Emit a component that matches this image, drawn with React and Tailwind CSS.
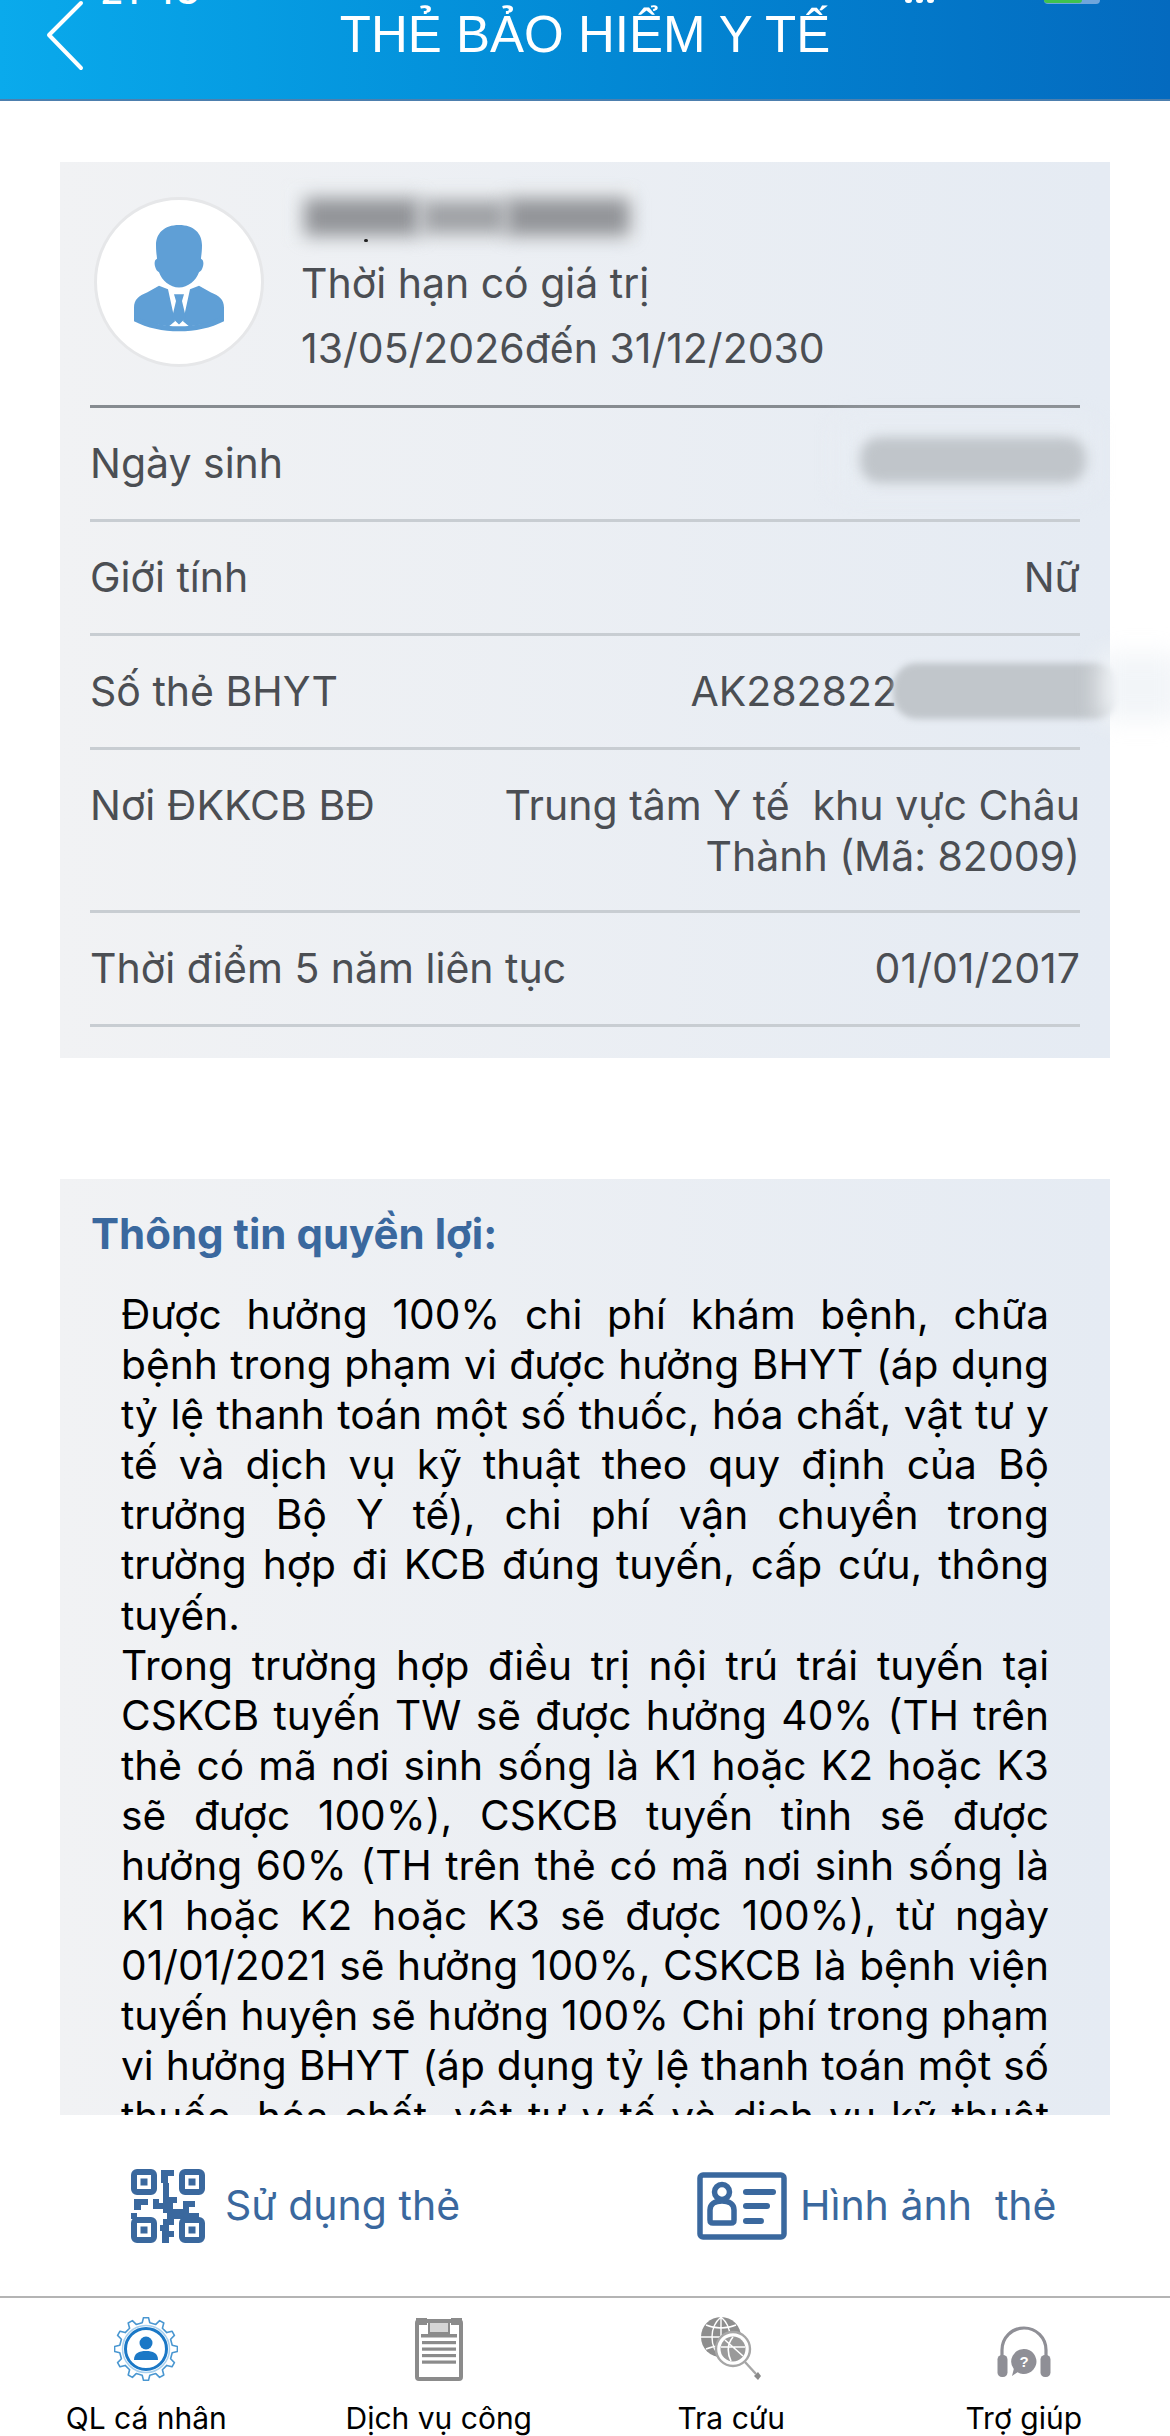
const FONT = "font-['Inter','Noto_Sans',sans-serif]";

const ROWS = [
  { label: 'Ngày sinh', value: '' },
  { label: 'Giới tính', value: 'Nữ' },
  { label: 'Số thẻ BHYT', value: 'AK282822', masked: true },
  { label: 'Nơi ĐKKCB BĐ', value: 'Trung tâm Y tế  khu vực Châu Thành (Mã: 82009)', wide: true },
  { label: 'Thời điểm 5 năm liên tục', value: '01/01/2017' },
];

function Gear() {
  // teeth are worked out around the circle
  const pts = [];
  const n = 12;
  for (let i = 0; i < n; i++) {
    const a = (i / n) * Math.PI * 2;
    const step = Math.PI / n;
    [[-0.55, 26.5], [-0.3, 31.5], [0.3, 31.5], [0.55, 26.5]].forEach(([o, r]) => {
      const t = a + o * step;
      pts.push(`${(32 + r * Math.cos(t)).toFixed(1)},${(32 + r * Math.sin(t)).toFixed(1)}`);
    });
  }
  return (
    <svg width="64" height="64" viewBox="0 0 64 64" fill="none">
      <polygon points={pts.join(' ')} stroke="#4a97d1" strokeWidth="1.6" strokeLinejoin="round" />
      <circle cx="32" cy="32" r="23.5" stroke="#a8d0ee" strokeWidth="1.5" />
      <circle cx="32" cy="32" r="20.5" stroke="#1b78c6" strokeWidth="3" />
      <circle cx="32" cy="26" r="6.5" fill="#1b78c6" />
      <path d="M20 43c0-7 5-9 12-9s12 2 12 9z" fill="#1b78c6" />
    </svg>
  );
}

function Clipboard() {
  return (
    <svg width="48" height="64" viewBox="0 0 48 64" fill="none">
      <rect x="2" y="4" width="44" height="58" rx="2" stroke="#8b8b8b" strokeWidth="4" />
      <rect x="1" y="1" width="11" height="7" fill="#8b8b8b" />
      <rect x="36" y="1" width="11" height="7" fill="#8b8b8b" />
      <rect x="14" y="5" width="20" height="11" fill="#d5d5d5" stroke="#8b8b8b" strokeWidth="2" />
      <rect x="6" y="17" width="36" height="3.5" fill="#8b8b8b" />
      <rect x="7" y="24" width="34" height="3.2" fill="#8b8b8b" />
      <rect x="7" y="30.5" width="34" height="3.2" fill="#8b8b8b" />
      <rect x="7" y="37" width="34" height="3.2" fill="#8b8b8b" />
      <rect x="7" y="43.5" width="34" height="3.2" fill="#8b8b8b" />
    </svg>
  );
}

function GlobeSearch() {
  return (
    <svg width="62" height="66" viewBox="0 0 62 66" fill="none">
      <circle cx="21" cy="21" r="20" fill="#8e8e8e" />
      <path d="M1 21h40M21 1v40M6 9c9 4 21 4 30 0M6 33c9-4 21-4 30 0M21 1c-12 10-12 30 0 40M21 1c12 10 12 30 0 40" stroke="#fff" strokeWidth="1.4" />
      <circle cx="33" cy="33" r="17" fill="#fff" stroke="#a6a6a6" strokeWidth="2.4" />
      <circle cx="33" cy="33" r="12.5" fill="#9a9a9a" />
      <path d="M21 31h24M33 21c-7 8-5 18-2 24M25 24l18 16" stroke="#fff" strokeWidth="1.6" />
      <path d="M45 46l11 12" stroke="#a6a6a6" strokeWidth="2.4" />
      <path d="M54 60l4-4 3 4-3 4z" fill="#8a8a8a" />
    </svg>
  );
}

function Headset() {
  return (
    <svg className="mt-[6px]" width="54" height="52" viewBox="0 0 54 52" fill="none">
      <path d="M5 30v-6a22 22 0 0 1 44 0v6" stroke="#8f8f96" strokeWidth="3.2" />
      <rect x="0.5" y="29" width="10" height="22" rx="4.5" fill="#8f8f96" />
      <rect x="43.5" y="29" width="10" height="22" rx="4.5" fill="#8f8f96" />
      <path d="M27 23a12.5 12.5 0 1 1-6.5 23.2L15 50l1.8-7A12.5 12.5 0 0 1 27 23z" fill="#8f8f96" />
      <text x="27" y="41" textAnchor="middle" fontSize="15" fontWeight="700" fill="#fff" fontFamily="Liberation Sans, sans-serif">?</text>
    </svg>
  );
}

function QrIcon() {
  const c = '#3a689e';
  return (
    <svg width="74" height="74" viewBox="0 0 74 74" fill="none">
      {[[0, 0], [48, 0], [0, 48], [48, 48]].map(([x, y]) => (
        <g key={`${x}-${y}`}>
          <rect x={x + 3} y={y + 3} width="20" height="20" rx="3" stroke={c} strokeWidth="6" />
          <rect x={x + 9.5} y={y + 9.5} width="7" height="7" fill={c} />
        </g>
      ))}
      <path d="M30 1h13v6h-6v7h-7zM32 14h6v14h-6zM3 30h14v6h-7v5H3zM22 30h6v6h-6zM32 28h14v6h-4v6h10v-8h12v6h-6v6h10v6H36v-6h-4v-4h-10v-6h10zM0 44h6v6H0zM32 50h11v6h-5v6h5v6h-5v6h-7V62h-2v-6h3z" fill={c} />
    </svg>
  );
}

function IdIcon() {
  const c = '#3a689e';
  return (
    <svg width="90" height="68" viewBox="0 0 90 68" fill="none">
      <rect x="3" y="3" width="84" height="62" rx="3" stroke={c} strokeWidth="5.5" />
      <circle cx="25" cy="20" r="7.5" stroke={c} strokeWidth="5.5" />
      <path d="M13 48V38c0-6 5-9 12-9s12 3 12 9v10c0 2-1 3-3 3H16c-2 0-3-1-3-3z" stroke={c} strokeWidth="5.5" />
      <rect x="46" y="17" width="33" height="6" rx="3" fill={c} />
      <rect x="46" y="31" width="27" height="6" rx="3" fill={c} />
      <rect x="46" y="46" width="21" height="6" rx="3" fill={c} />
    </svg>
  );
}

function PersonIcon() {
  return (
    <svg className="-mt-[6px]" width="92" height="108" viewBox="0 0 92 128" preserveAspectRatio="none" fill="#5f9fd6">
      <path d="M46 0c15 0 23 10 23 24 0 8-1 14-1 16 2 1 3 4 2 9-1 4-2 6-4 7-3 10-11 18-20 18s-17-8-20-18c-2-1-3-3-4-7-1-5 0-8 2-9 0-2-1-8-1-16C23 10 31 0 46 0z" />
      <path d="M26 72l9 4 7 38-6 6C24 118 10 116 1 108v-10C1 88 6 84 14 80z" />
      <path d="M66 72l-9 4-7 38 6 6c12-2 26-4 35-12v-10c0-10-5-14-13-18z" />
      <path d="M41 82h10l-2 8 4 20-7 8-7-8 4-20z" />
      <path d="M1 106c13 10 29 14 45 14s32-4 45-14v8c-13 8-29 12-45 12S14 122 1 114z" />
    </svg>
  );
}

function Smudge({ className }) {
  return <div className={`absolute ${className}`} />;
}

export default function App() {
  const tabs = [
    { label: 'QL cá nhân', icon: <Gear /> },
    { label: 'Dịch vụ công', icon: <Clipboard /> },
    { label: 'Tra cứu', icon: <GlobeSearch /> },
    { label: 'Trợ giúp', icon: <Headset /> },
  ];

  return (
    <div className={`relative w-[1170px] h-[2436px] flex flex-col overflow-hidden bg-white ${FONT}`}>
      {/* Header */}
      <header className="relative h-[101px] shrink-0 flex justify-center bg-gradient-to-r from-[#0aaaec] to-[#046abf] border-b-2 border-[#4d7fae]">
        <span className="absolute left-[100px] -top-[29px] text-[38px] leading-[38px] font-medium text-white">21:43</span>
        <div className="absolute left-[905px] top-0 flex gap-[4px]">
          <i className="block w-[7px] h-[3px] bg-white rounded-b-sm" />
          <i className="block w-[7px] h-[3px] bg-white rounded-b-sm" />
          <i className="block w-[7px] h-[3px] bg-white rounded-b-sm" />
        </div>
        <div className="absolute left-[1044px] top-0 w-[56px] h-[4px] bg-[#6fa6dc] rounded-b-md">
          <div className="w-[38px] h-[3px] bg-[#3fc24f] rounded-b-md" />
        </div>
        <svg className="absolute left-[44px] top-0" width="42" height="74" viewBox="0 0 42 74" fill="none">
          <path d="M37 3L5 35l32 33" stroke="#fff" strokeWidth="4" strokeLinecap="round" strokeLinejoin="round" />
        </svg>
        <h1 className="font-['Liberation_Sans',sans-serif] font-normal text-[51px] leading-[70px] text-white">THẺ BẢO HIỂM Y TẾ</h1>
      </header>

      <main className="flex-1 min-h-0 flex flex-col px-[60px] pt-[61px]">
        {/* Card */}
        <section className="relative shrink-0 h-[896px] bg-gradient-to-r from-[#f1f2f4] to-[#e5ebf3] px-[30px] text-[#4b4e53] text-[41px] leading-[51px]">
          <div className="h-[246px] flex border-b-[3px] border-[#868b90]">
            <div className="mt-[35px] ml-[4px] w-[170px] h-[170px] shrink-0 rounded-full bg-white border-[3px] border-[#e6e7e9] flex items-center justify-center">
              <PersonIcon />
            </div>
            <div className="ml-[37px] pt-[89px] leading-[65px] whitespace-nowrap">
              <div>Thời hạn có giá trị</div>
              <div>13/05/2026đến 31/12/2030</div>
            </div>
          </div>
          {ROWS.map((r) => (
            <div key={r.label} className={`flex justify-between border-b-[3px] border-[#c8cdd2] pt-[30px] ${r.wide ? 'pb-[28px]' : 'pb-[30px]'}`}>
              <span className="shrink-0">{r.label}</span>
              <span className={`text-right whitespace-pre-wrap ${r.wide ? 'w-[620px]' : ''} ${r.masked ? 'pr-[183px]' : ''}`}>{r.value}</span>
            </div>
          ))}

          {/* blurred out personal data */}
          <Smudge className="left-[226px] top-[22px] w-[350px] h-[58px] bg-[#eef1f4] blur-[3px]" />
          <Smudge className="left-[244px] top-[36px] w-[116px] h-[38px] bg-[#929498] blur-[9px]" />
          <Smudge className="left-[362px] top-[38px] w-[84px] h-[34px] bg-[#9fa1a5] blur-[9px]" />
          <Smudge className="left-[446px] top-[36px] w-[124px] h-[38px] bg-[#929498] blur-[9px]" />
          <Smudge className="left-[304px] top-[77px] w-[4px] h-[3px] bg-[#222] rounded-full" />
          <Smudge className="left-[780px] top-[262px] w-[250px] h-[66px] bg-[#e8edf3] blur-md" />
          <Smudge className="left-[800px] top-[275px] w-[226px] h-[46px] bg-[#c0c5ca] rounded-[20px] blur-[6px]" />
          <Smudge className="left-[833px] top-[501px] w-[225px] h-[56px] bg-[#c1c6cb] rounded-[24px] blur-[3px]" />
          <Smudge className="left-[1040px] top-[492px] w-[80px] h-[66px] bg-[#f2f5f8] blur-md" />
        </section>

        {/* Benefits */}
        <section className="mt-[121px] h-[936px] shrink-0 overflow-hidden bg-gradient-to-r from-[#f1f2f4] to-[#e5ebf3]">
          <h2 className="pl-[31px] pt-[30px] text-[42px] leading-[50px] font-bold text-[#3a689e]">Thông tin quyền lợi:</h2>
          <div className="pl-[61px] pr-[61px] pt-[31px] text-[40.7px] leading-[50.1px] text-black text-justify">
            <p>Được hưởng 100% chi phí khám bệnh, chữa bệnh trong phạm vi được hưởng BHYT (áp dụng tỷ lệ thanh toán một số thuốc, hóa chất, vật tư y tế và dịch vụ kỹ thuật theo quy định của Bộ trưởng Bộ Y tế), chi phí vận chuyển trong trường{'\u00A0'}hợp đi KCB đúng tuyến, cấp cứu, thông tuyến.</p>
            <p className="[text-align-last:justify]">Trong trường hợp điều trị nội trú trái tuyến tại CSKCB tuyến TW sẽ được hưởng 40% (TH trên thẻ có mã nơi sinh sống là K1 hoặc K2 hoặc K3 sẽ được 100%), CSKCB tuyến tỉnh sẽ được hưởng 60% (TH trên thẻ có mã nơi sinh sống là K1 hoặc K2 hoặc K3 sẽ được 100%), từ ngày 01/01/2021 sẽ hưởng 100%, CSKCB là bệnh viện tuyến huyện sẽ hưởng 100% Chi phí trong phạm vi hưởng BHYT (áp dụng tỷ lệ thanh toán một số thuốc, hóa chất, vật tư y tế và dịch vụ kỹ thuật</p>
          </div>
        </section>

        {/* Actions */}
        <div className="flex-1 flex items-center text-[#3a689e] text-[41px]">
          <div className="ml-[71px] flex items-center gap-[20px] w-[566px]">
            <QrIcon />
            <span>Sử dụng thẻ</span>
          </div>
          <div className="flex items-center gap-[13px]">
            <IdIcon />
            <span className="whitespace-pre">Hình ảnh  thẻ</span>
          </div>
        </div>
      </main>

      {/* Tab bar */}
      <nav className="h-[140px] shrink-0 grid grid-cols-4 border-t-2 border-[#b4b4b4]">
        {tabs.map((t) => (
          <div key={t.label} className="flex flex-col items-center pt-[16px]">
            <div className="h-[70px] flex items-center justify-center">{t.icon}</div>
            <span className="mt-[16px] text-[30px] leading-[36px] text-black whitespace-nowrap">{t.label}</span>
          </div>
        ))}
      </nav>
    </div>
  );
}
